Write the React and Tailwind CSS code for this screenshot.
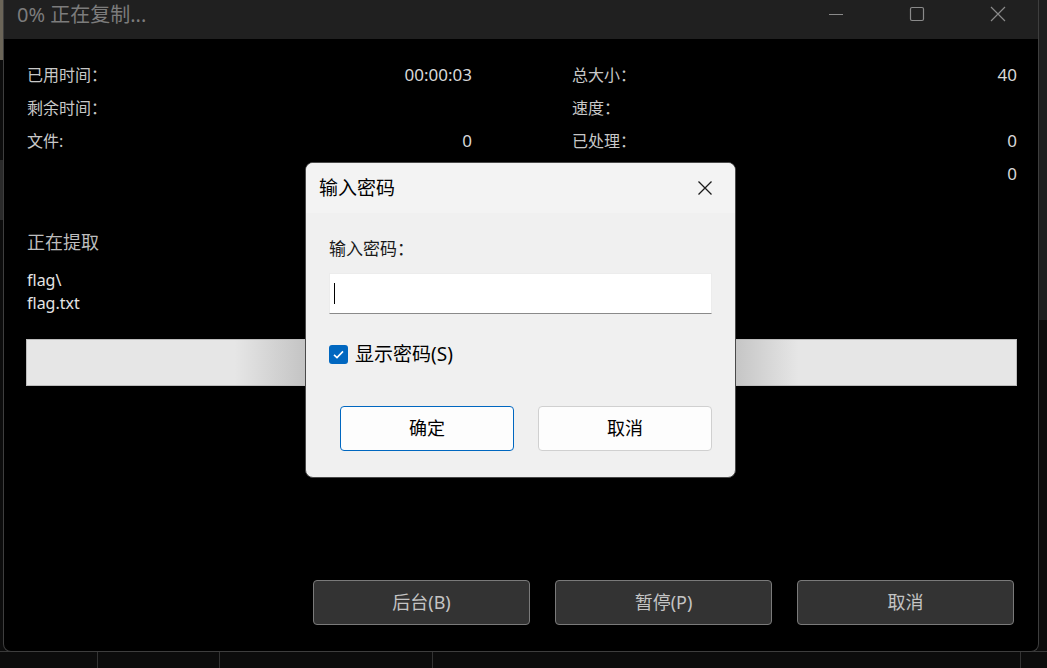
import React from "react";

const F = { fontFamily: '"Noto Sans","Noto Sans CJK SC",sans-serif' };

function Stat({ label, value }) {
  return (
    <div className="flex items-center justify-between h-[33px]">
      <span className="text-[16px] text-[#c8c8c8]">{label}</span>
      <span className="text-[17px] text-[#d8d8d8]">{value}</span>
    </div>
  );
}

export default function App() {
  return (
    <div
      className="relative w-[1047px] h-[668px] overflow-hidden bg-[#0c0c0c]"
      style={F}
    >
      {/* desktop bits behind */}
      <div className="absolute left-0 top-0 w-[3px] h-[60px] bg-[#6b6558]" />
      <div className="absolute left-0 top-[160px] w-[3px] h-[60px] bg-[#2a2a2a]" />
      <div className="absolute right-0 top-0 w-[9px] h-[320px] bg-[#1e1e1e]" />
      <div className="absolute left-0 top-[651px] w-full h-px bg-[#3a3a3a]" />
      <div className="absolute left-[97px] top-[652px] w-px h-[16px] bg-[#333]" />
      <div className="absolute left-[219px] top-[652px] w-px h-[16px] bg-[#333]" />
      <div className="absolute left-[432px] top-[652px] w-px h-[16px] bg-[#333]" />
      <div className="absolute left-[1020px] top-[652px] w-px h-[16px] bg-[#333]" />

      {/* main window */}
      <div className="relative ml-[3px] w-[1036px] h-[652px] border border-t-0 border-[#3e3e3e] rounded-b-[8px] bg-black flex flex-col overflow-hidden">
        {/* title bar */}
        <div className="h-[39px] bg-[#202020] flex items-start shrink-0">
          <div className="h-[30px] flex items-center pl-[13px] text-[20px] text-[#7c7c7c] flex-1">
            0% 正在复制...
          </div>
          <div className="h-[27px] flex items-center">
            <div className="w-[81px] flex justify-center">
              <svg width="16" height="16" viewBox="0 0 16 16">
                <line x1="1" y1="8.5" x2="15" y2="8.5" stroke="#8a8a8a" strokeWidth="1" />
              </svg>
            </div>
            <div className="w-[81px] flex justify-center">
              <svg width="16" height="16" viewBox="0 0 16 16">
                <rect x="1.5" y="1.5" width="13" height="13" rx="1.5" fill="none" stroke="#8a8a8a" strokeWidth="1.2" />
              </svg>
            </div>
            <div className="w-[81px] flex justify-center">
              <svg width="16" height="16" viewBox="0 0 16 16">
                <path d="M1 1 L15 15 M15 1 L1 15" stroke="#8a8a8a" strokeWidth="1.2" />
              </svg>
            </div>
          </div>
        </div>

        {/* body */}
        <div className="flex-1 flex flex-col pl-[23px] pr-[21px] pt-[19px] pb-[26px]">
          <div className="grid grid-cols-2 gap-x-[100px]">
            <Stat label="已用时间：" value="00:00:03" />
            <Stat label="总大小：" value="40" />
            <Stat label="剩余时间：" value="" />
            <Stat label="速度：" value="" />
            <Stat label="文件:" value="0" />
            <Stat label="已处理：" value="0" />
            <Stat label="" value="" />
            <Stat label="" value="0" />
          </div>

          <div className="mt-[40px] h-[24px] flex items-center text-[18px] text-[#bdbdbd]">
            正在提取
          </div>
          <div className="mt-[15px] text-[16px] leading-[23px] text-[#e4e4e4]">
            <div>flag\</div>
            <div>flag.txt</div>
          </div>

          <div className="mt-[24px] -ml-[1px] h-[47px] w-[991px] border border-[#bcbcbc] bg-[linear-gradient(to_right,#e6e6e6_0%,#e6e6e6_21%,#c2c2c2_28.5%,#c2c2c2_71%,#e6e6e6_78%,#e6e6e6_100%)]" />

          <div className="mt-auto flex justify-end gap-[25px] pr-[3px]">
            {["后台(B)", "暂停(P)", "取消"].map((t) => (
              <div
                key={t}
                className="w-[217px] h-[45px] rounded-[4px] border border-[#7a7a7a] bg-[#333333] flex items-center justify-center text-[18px] text-[#c4c4c4]"
              >
                {t}
              </div>
            ))}
          </div>
        </div>
      </div>

      {/* password dialog */}
      <div className="absolute left-[305px] top-[162px] w-[431px] h-[316px] rounded-[8px] border border-[#4a4a4a] bg-[#f0f0f0] overflow-hidden flex flex-col">
        <div className="h-[50px] bg-[#f3f3f3] flex items-center justify-between pl-[13px] pr-[22px] shrink-0">
          <span className="text-[19px] text-black">输入密码</span>
          <svg width="16" height="16" viewBox="0 0 16 16">
            <path d="M1.5 1.5 L14.5 14.5 M14.5 1.5 L1.5 14.5" stroke="#1a1a1a" strokeWidth="1.3" />
          </svg>
        </div>
        <div className="flex flex-col pl-[23px] pr-[23px]">
          <div className="mt-[26px] h-[20px] flex items-center text-[17px] text-[#1a1a1a]">
            输入密码：
          </div>
          <div className="mt-[14px] w-[383px] h-[41px] bg-white border border-[#ececec] border-b-[#8a8a8a] flex items-center pl-[4px]">
            <div className="w-px h-[21px] bg-black" />
          </div>
          <div className="mt-[30px] h-[20px] flex items-center gap-[7px]">
            <div className="w-[19px] h-[19px] rounded-[3px] bg-[#0067c0] flex items-center justify-center">
              <svg width="13" height="13" viewBox="0 0 13 13">
                <path d="M2 6.8 L5 9.6 L11 3.4" fill="none" stroke="white" strokeWidth="1.6" />
              </svg>
            </div>
            <span className="text-[19px] text-black">显示密码(S)</span>
          </div>
          <div className="mt-[42px] pl-[11px] flex gap-[24px]">
            <div className="w-[174px] h-[45px] rounded-[4px] border border-[#0067c0] bg-[#fdfdfd] flex items-center justify-center text-[18px] text-black">
              确定
            </div>
            <div className="w-[174px] h-[45px] rounded-[4px] border border-[#d0d0d0] bg-[#fdfdfd] flex items-center justify-center text-[18px] text-black">
              取消
            </div>
          </div>
        </div>
      </div>
    </div>
  );
}
